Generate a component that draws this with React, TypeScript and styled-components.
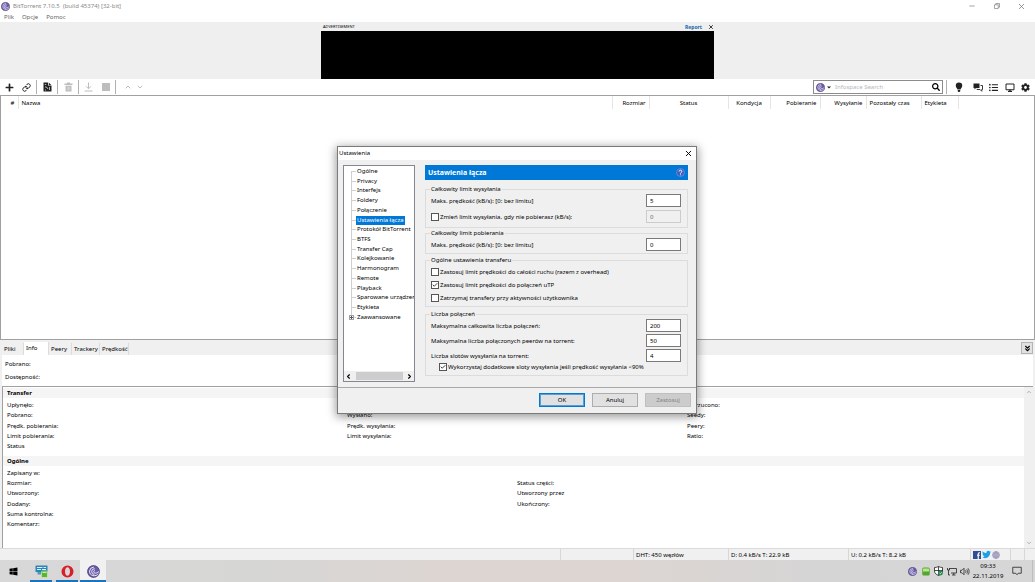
import React from 'react';
import styled, { createGlobalStyle, css } from 'styled-components';
import { FaPlus, FaSearch, FaListUl, FaCog, FaWindows, FaTwitter } from 'react-icons/fa';
import { Link as LinkIcon, X, Minus, ChevronUp, ChevronDown, ChevronLeft, ChevronRight, ChevronsDown, Check } from 'lucide-react';

const line = '#a0a0a0';
const face = '#f0f0f0';
const accent = '#0078d7';

const GlobalStyle = createGlobalStyle`
  *, *::before, *::after { box-sizing: border-box; }
  body { margin: 0; background: #fff; }
  body, button, input { font-family: "Noto Sans", "Open Sans", sans-serif; font-size: 6px; line-height: 10px; color: #000; }
  button { margin: 0; padding: 0; border: 0; background: none; display: inline-flex; align-items: center; justify-content: center; }
  svg { display: block; flex: none; }
  ul, dl, dd, dt { margin: 0; padding: 0; list-style: none; }
`;

/* ---------- window frame ---------- */

const Desktop = styled.div`
  position: relative;
  min-height: 100vh;
  display: flex;
  flex-direction: column;
`;

const TitleBar = styled.header`
  display: flex;
  align-items: center;
  height: 12px;
  padding: 0 8px 0 1px;
  gap: 3px;
  color: #8a8a8a;
`;

const TitleText = styled.span`
  flex: 1;
  white-space: pre;
`;

const WindowButtons = styled.div`
  display: flex;
  gap: 14px;
  button { width: 11px; height: 10px; color: #777; }
`;

const MenuBar = styled.nav`
  display: flex;
  height: 10px;
  padding-left: 4px;
  gap: 8px;
  button { color: #666; }
`;

const AdArea = styled.section`
  display: flex;
  justify-content: center;
  background: #efefef;
`;

const AdUnit = styled.div`
  width: 393px;
`;

const AdHeader = styled.div`
  display: flex;
  align-items: center;
  height: 9px;
  padding: 0 0 0 2px;
  font-size: 4px;
`;

const AdReport = styled.a`
  margin-left: auto;
  margin-right: 6px;
  font-size: 5px;
  font-weight: 700;
  color: #1565b0;
  text-decoration: none;
`;

const AdBanner = styled.div`
  height: 48px;
  background: #000;
`;

/* ---------- toolbar ---------- */

const Toolbar = styled.div`
  display: flex;
  align-items: center;
  height: 16px;
  padding: 0 2px;
`;

const ToolButton = styled.button<{ $w: number; $dim?: boolean }>`
  width: ${p => p.$w}px;
  height: 14px;
  color: ${p => (p.$dim ? '#bdbdbd' : '#222')};
`;

const MoveButtons = styled.div`
  display: flex;
  padding-left: 6px;
`;

const ToolDivider = styled.span`
  width: 1px;
  height: 14px;
  background: #b0b0b0;
`;

const SearchBox = styled.form`
  display: flex;
  align-items: center;
  width: 130px;
  height: 14px;
  margin-left: auto;
  margin-right: 3px;
  padding: 0 2px;
  border: 1px solid #8c8c8c;
  input {
    flex: 1;
    min-width: 0;
    margin-left: 4px;
    padding: 0;
    border: 0;
    outline: 0;
    background: none;
  }
  input::placeholder { color: #b4b8be; opacity: 1; }
  button { gap: 2px; }
`;

/* ---------- torrent list ---------- */

const TorrentPane = styled.main`
  flex: 1;
  min-height: 245px;
  border: 1px solid ${line};
`;

const TorrentTable = styled.table`
  width: 100%;
  table-layout: fixed;
  border-collapse: collapse;
`;

const HeadCell = styled.th<{ $w?: number; $align?: string }>`
  width: ${p => (p.$w ? p.$w + 'px' : 'auto')};
  height: 13px;
  padding: 0 3px;
  border-right: 1px solid #e5e5e5;
  font-weight: 400;
  text-align: ${p => p.$align ?? 'left'};
  white-space: nowrap;
  &:last-child { border-right: 0; }
`;

/* ---------- details pane ---------- */

const Details = styled.section`
  padding: 2px 2px 0;
  background: ${face};
`;

const TabStrip = styled.div`
  display: flex;
  height: 13px;
  align-items: flex-end;
`;

const Tab = styled.button<{ $w: number; $active?: boolean }>`
  width: ${p => p.$w}px;
  height: 12px;
  padding-left: 2px;
  justify-content: flex-start;
  border-right: 1px solid #dcdcdc;
  ${p => p.$active && css`
    height: 13px;
    padding-bottom: 2px;
    background: #fff;
  `}
`;

const CollapseButton = styled.button`
  align-self: flex-start;
  width: 12px;
  height: 12px;
  margin-left: auto;
  border: 1px solid #b4b4b4;
  background: #e1e1e1;
`;

const TabBody = styled.div`
  background: #fff;
`;

const Summary = styled.dl`
  display: flex;
  flex-direction: column;
  gap: 3px;
  height: 31px;
  padding: 4px 0 0 3px;
`;

const InfoBox = styled.div`
  display: flex;
  height: 162px;
  border-top: 1px solid ${line};
  border-left: 1px solid ${line};
`;

const InfoScroll = styled.div`
  flex: 1;
  padding-top: 1px;
`;

const InfoHeading = styled.h2`
  height: 10px;
  margin: 0;
  padding-left: 4px;
  font-size: 6px;
  line-height: 10px;
  background: #f5f5f5;
`;

const InfoGrid = styled.div<{ $cols: number; $rows: number }>`
  display: grid;
  grid-template-columns: repeat(${p => p.$cols}, 1fr);
  grid-template-rows: repeat(${p => p.$rows}, 10px);
  grid-auto-flow: column;
  column-gap: 3px;
  padding: 2px 0 5px 4px;
  align-content: space-between;
  height: ${p => (p.$rows === 5 ? 58 : 68)}px;
`;

const VScroll = styled.div`
  display: flex;
  flex-direction: column;
  justify-content: space-between;
  align-items: center;
  width: 9px;
  padding: 2px 0;
  background: ${face};
  color: #999;
`;

const StatusBar = styled.footer`
  display: flex;
  height: 12px;
  border-top: 1px solid #dadada;
  background: ${face};
`;

const StatusCell = styled.div<{ $w?: number }>`
  display: flex;
  align-items: center;
  gap: 1px;
  flex: ${p => (p.$w ? `0 0 ${p.$w}px` : '1')};
  padding-left: 2px;
  border-right: 1px solid #d7d7d7;
  white-space: nowrap;
  &:last-child { border-right: 0; }
`;

/* ---------- taskbar ---------- */

const TaskBar = styled.div`
  display: flex;
  align-items: center;
  height: 22px;
  background: linear-gradient(90deg, #d8d8d8 0%, #d6d6d5 25%, #dcd5d2 42%, #dcd5d2 60%, #d5d5d5 80%, #d6d6d6 100%);
`;

const TaskButton = styled.button<{ $w: number; $open?: boolean; $active?: boolean }>`
  width: ${p => p.$w}px;
  height: 22px;
  border-bottom: 2px solid ${p => (p.$open ? '#1a74bd' : 'transparent')};
  background: ${p => (p.$active ? '#f1f1f1' : 'none')};
  padding-top: 2px;
`;

const TaskGroup = styled.div`
  display: flex;
  gap: 4px;
  margin-left: 4px;
  & > :last-child { margin-left: -2px; }
`;

const Tray = styled.div`
  display: flex;
  align-items: center;
  margin-left: auto;
`;

const TrayButton = styled.button`
  width: 13px;
  height: 22px;
`;

const Clock = styled.time`
  width: 34px;
  text-align: center;
`;

const NotifyArea = styled.div`
  display: flex;
  align-items: center;
  justify-content: center;
  width: 28px;
  height: 22px;
  margin-right: 2px;
  padding-right: 3px;
  border-right: 1px solid #bdbdbd;
`;

/* ---------- settings dialog ---------- */

const DialogLayer = styled.div`
  position: absolute;
  inset: 0;
  display: flex;
  justify-content: center;
  align-items: flex-start;
  padding: 146px 1px 0 0;
`;

const Dialog = styled.section`
  width: 360px;
  border: 1px solid #7a7a7a;
  background: ${face};
  box-shadow: 0 2px 9px 1px rgba(0, 0, 0, 0.4);
`;

const DialogTitle = styled.header`
  display: flex;
  align-items: center;
  justify-content: space-between;
  height: 13px;
  padding: 0 3px 1px 1px;
  background: #fff;
`;

const DialogBody = styled.div`
  display: flex;
  gap: 10px;
  padding: 5px 8px 5px 5px;
`;

const TreePanel = styled.nav`
  display: flex;
  flex-direction: column;
  justify-content: space-between;
  width: 72px;
  height: 217px;
  padding-top: 1px;
  border: 1px solid #828790;
  background: #fff;
  overflow: hidden;
`;

const Tree = styled.ul`
  position: relative;
  display: flex;
  flex-direction: column;
  justify-content: space-between;
  height: 155px;
  padding-left: 7px;
  &::before {
    content: '';
    position: absolute;
    left: 7px;
    top: 5px;
    bottom: 5px;
    border-left: 1px solid #cfcfcf;
  }
`;

const TreeItem = styled.li`
  display: flex;
  align-items: center;
  height: 9px;
  white-space: nowrap;
  &::before {
    content: '';
    flex: none;
    width: 5px;
    border-top: 1px solid #cfcfcf;
  }
`;

const TreeLabel = styled.a<{ $selected?: boolean }>`
  padding: 0 1px;
  line-height: 9px;
  color: ${p => (p.$selected ? '#fff' : '#000')};
  background: ${p => (p.$selected ? accent : 'none')};
  text-decoration: none;
`;

const Expander = styled.span`
  position: absolute;
  left: 5px;
  bottom: 2px;
  width: 5px;
  height: 5px;
  border: 1px solid #a0a0a0;
  background: linear-gradient(#556, #556) center / 3px 1px no-repeat, linear-gradient(#556, #556) center / 1px 3px no-repeat, #fff;
`;

const HScroll = styled.div`
  display: flex;
  align-items: center;
  justify-content: space-between;
  height: 10px;
  padding: 0 1px;
  background: ${face};
`;

const HThumb = styled.span`
  width: 47px;
  height: 8px;
  background: #cdcdcd;
`;

const Page = styled.form`
  flex: 1;
`;

const PageHeading = styled.h1`
  display: flex;
  align-items: center;
  justify-content: space-between;
  height: 15px;
  margin: 0 0 4px;
  padding: 0 3px;
  font-size: 7px;
  color: #fff;
  background: ${accent};
`;

const Group = styled.fieldset<{ $pad?: string; $top?: number }>`
  min-width: 0;
  margin: ${p => p.$top ?? 0}px 0 0;
  padding: ${p => p.$pad ?? '0'};
  padding-left: 5px;
  padding-right: 6px;
  border: 1px solid #dcdcdc;
  legend { height: 10px; padding: 0 1px; margin-left: -1px; }
`;

const Fields = styled.div<{ $gap: number }>`
  display: flex;
  flex-direction: column;
  gap: ${p => p.$gap}px;
`;

const Field = styled.div`
  display: flex;
  align-items: center;
  justify-content: space-between;
  height: 13px;
`;

const NumberBox = styled.input`
  width: 35px;
  height: 13px;
  padding: 0 3px;
  border: 1px solid #7a7a7a;
  background: #fff;
  &:disabled { border-color: #ccc; background: ${face}; color: #6d6d6d; }
`;

const CheckLabel = styled.label<{ $indent?: boolean }>`
  display: flex;
  align-items: center;
  gap: 1px;
  height: ${p => (p.$indent ? 10 : 13)}px;
  padding-left: ${p => (p.$indent ? 8 : 0)}px;
  white-space: nowrap;
`;

const CheckMark = styled.span`
  display: grid;
  width: 8px;
  height: 8px;
  & > * { grid-area: 1 / 1; }
  input {
    appearance: none;
    width: 8px;
    height: 8px;
    margin: 0;
    border: 1px solid #555;
    background: #fff;
  }
  svg { visibility: hidden; place-self: center; z-index: 1; pointer-events: none; }
  input:checked + svg { visibility: visible; }
`;

const DialogActions = styled.footer`
  display: flex;
  justify-content: flex-end;
  gap: 7px;
  height: 26px;
  padding: 5px 5px 0 0;
  border-top: 1px solid #a8a8a8;
`;

const PushButton = styled.button<{ $primary?: boolean }>`
  width: 46px;
  height: 14px;
  border: 1px solid #adadad;
  background: #e1e1e1;
  ${p => p.$primary && css`border: 1px solid ${accent}; box-shadow: inset 0 0 0 1px #5a9fd0;`}
  &:disabled { border-color: #bfbfbf; background: #ccc; color: #838383; }
`;

/* ---------- drawings ---------- */

const Logo = ({ size }: { size: number }) => (
  <svg width={size} height={size} viewBox="0 0 20 20" aria-hidden="true">
    <circle cx="10" cy="10" r="9.6" fill="#6b5ca5" />
    <circle cx="10" cy="10" r="9" fill="none" stroke="#4d4180" strokeWidth="1" />
    <g fill="none" stroke="#eeeaf8" strokeWidth="1.5" strokeLinecap="round">
      <path d="M10 3.2a6.6 6.6 0 0 0-1 13" />
      <path d="M11 5.6a4.6 4.6 0 0 0-.3 9" />
      <path d="M11.6 8a2.4 2.4 0 0 0 .4 4.4c2 .4 4-.3 6-2" />
      <path d="M10 16.4c3 .4 5.6-.5 7-2.4" />
    </g>
  </svg>
);

const RestoreIcon = () => (
  <svg width="6" height="6" viewBox="0 0 12 12" fill="none" stroke="currentColor" strokeWidth="1.3">
    <path d="M1 3.5h7.500V11H1zM3.500 3.500V1H11v7.500H8.500" />
  </svg>
);

const NewTorrentIcon = () => (
  <svg width="9" height="10" viewBox="0 0 18 20">
    <path d="M1 1h9v6h7v12H1z" fill="#222" />
    <path d="M11.500 1l5 5h-5z" fill="#222" />
    <path d="M3.500 5h3M4 10h3l3 4M13 10v6M4 16h2" fill="none" stroke="#fff" strokeWidth="1.300" />
  </svg>
);

const TrashIcon = () => (
  <svg width="9" height="10" viewBox="0 0 18 20" fill="currentColor">
    <path d="M6 1h6v2h5v3H1V3h5zM3 7.500h12V19H3z" />
    <path d="M6.500 9.500v7M9 9.500v7M11.500 9.500v7" stroke="#e8e8e8" strokeWidth="1" />
  </svg>
);

const DownloadIcon = () => (
  <svg width="9" height="10" viewBox="0 0 18 20" fill="none" stroke="currentColor" strokeWidth="2">
    <path d="M9 1v12M4 8.500l5 5 5-5M1 18h16" />
  </svg>
);

const StopIcon = () => (
  <svg width="8" height="8" viewBox="0 0 8 8"><rect width="8" height="8" fill="currentColor" /></svg>
);

const CaretIcon = () => (
  <svg width="4" height="3" viewBox="0 0 4 3"><path d="M0 .5h4L2 2.500z" fill="#222" /></svg>
);

const BulbIcon = () => (
  <svg width="8" height="10" viewBox="0 0 16 20" fill="currentColor">
    <path d="M8 1a6.500 6.500 0 0 0-6.500 6.500c0 3 2.500 4.500 3.500 7.500h6c1-3 3.500-4.500 3.500-7.500A6.500 6.500 0 0 0 8 1zM5.500 16h5v2.500L9 20H7l-1.500-1.500z" />
  </svg>
);

const ChatIcon = () => (
  <svg width="10" height="9" viewBox="0 0 20 18">
    <path d="M1 1h12v9H6l-3 3v-3H1z" fill="#222" />
    <path d="M15 5h4v8h-1.500v3.500L14 13H8v-1.500" fill="none" stroke="#222" strokeWidth="1.800" />
  </svg>
);

const MonitorIcon = () => (
  <svg width="10" height="9" viewBox="0 0 20 18" fill="none" stroke="#222" strokeWidth="2">
    <path d="M2 2h16v11.500H2z" />
    <path d="M6 16.500h8M10 13v3" strokeWidth="2.500" />
  </svg>
);

const HelpIcon = () => (
  <svg width="9" height="9" viewBox="0 0 18 18">
    <circle cx="9" cy="9" r="8" fill="#3f62c4" stroke="#8fa6e0" strokeWidth="1" />
    <path d="M6.300 7a2.700 2.700 0 1 1 4 2.300c-1 .6-1.300 1-1.300 2M9 12.800v1.700" fill="none" stroke="#fff" strokeWidth="1.800" />
  </svg>
);

const FacebookIcon = () => (
  <svg width="8" height="8" viewBox="0 0 16 16">
    <rect width="16" height="16" fill="#2f4f92" />
    <path d="M14 3.500h-1.500c-1.500 0-2 .8-2 2V16M8 8.500h5.500" fill="none" stroke="#fff" strokeWidth="2.300" />
  </svg>
);

const GlobeIcon = () => (
  <svg width="8" height="8" viewBox="0 0 16 16" fill="#d2d0e2" stroke="#8683ab" strokeWidth="1.100">
    <circle cx="8" cy="8" r="7" />
    <path d="M1 8h14M8 1v14M2.500 4.500h11M2.500 11.500h11M8 1c-5 4-5 10 0 14M8 1c5 4 5 10 0 14" fill="none" />
  </svg>
);

const ServerAppIcon = () => (
  <svg width="13" height="13" viewBox="0 0 26 26">
    <rect x="1" y="1" width="24" height="13" rx="1" fill="#2a86b5" />
    <path d="M4 5h11M4 9h8M17 5h5M14 9h8" stroke="#d9eef8" strokeWidth="2" />
    <path d="M5 14h8v5H5z" fill="#4f9cc0" />
    <rect x="13" y="12" width="12" height="13" rx="2" fill="#5cb52f" stroke="#e9f7e0" strokeWidth="1" />
    <path d="M15 15h8" stroke="#c9efb2" strokeWidth="2" />
  </svg>
);

const OperaIcon = () => (
  <svg width="13" height="13" viewBox="0 0 26 26">
    <path fillRule="evenodd" fill="#d81f2a" d="M13 1a12 12 0 1 0 0 24a12 12 0 1 0 0-24zM13 4.500c3 0 5 3.800 5 8.500s-2 8.500-5 8.500-5-3.800-5-8.500 2-8.500 5-8.500z" />
  </svg>
);

const GreenDriveIcon = () => (
  <svg width="8" height="9" viewBox="0 0 16 18">
    <rect x=".5" y="1" width="15" height="16" rx="3" fill="#55a630" />
    <rect x="2" y="3" width="12" height="6" rx="1" fill="#b9e58f" />
  </svg>
);

const ShieldIcon = () => (
  <svg width="9" height="10" viewBox="0 0 18 20">
    <path d="M9 1c2.500 1.500 5 2 8 2v7c0 4.500-4 7.500-8 9-4-1.500-8-4.500-8-9V3c3 0 5.500-.5 8-2zM9 1v18M1 9h16" fill="#fff" stroke="#222" strokeWidth="1.600" />
    <circle cx="13" cy="14" r="4.800" fill="#1f8a4c" />
    <path d="M10.800 14l1.700 1.700 3-3.400" fill="none" stroke="#fff" strokeWidth="1.400" />
  </svg>
);

const NetworkIcon = () => (
  <svg width="10" height="9" viewBox="0 0 20 18" fill="none" stroke="#222" strokeWidth="1.600">
    <path d="M5 3h14v9H8M10 16h7M13.500 12v4M1 2v4h4V2M3 6v10h3" />
  </svg>
);

const VolumeIcon = () => (
  <svg width="10" height="9" viewBox="0 0 20 18" fill="none" stroke="#222" strokeWidth="1.500">
    <path d="M1 6.500h3l4-4v13l-4-4H1zM11 6.500c1 1.500 1 3.500 0 5M13.500 4.500c2 3 2 6 0 9M16 2.500c3 4 3 9 0 13" />
  </svg>
);

const NoteIcon = () => (
  <svg width="10" height="10" viewBox="0 0 20 20" fill="none" stroke="#222" strokeWidth="1.600">
    <path d="M1.500 2.500h17v12h-6L10 17.500l-2.500-3h-6z" />
  </svg>
);

/* ---------- content ---------- */

const columns: { label: string; w?: number; align?: string }[] = [
  { label: '#', w: 17, align: 'right' },
  { label: 'Nazwa' },
  { label: 'Rozmiar', w: 37, align: 'right' },
  { label: 'Status', w: 79, align: 'center' },
  { label: 'Kondycja', w: 42, align: 'center' },
  { label: 'Pobieranie', w: 50, align: 'right' },
  { label: 'Wysyłanie', w: 46, align: 'right' },
  { label: 'Pozostały czas', w: 55 },
  { label: 'Etykieta', w: 37 },
  { label: '', w: 76 },
];

const tabs = [
  { label: 'Pliki', w: 22 },
  { label: 'Info', w: 25, active: true },
  { label: 'Peery', w: 23 },
  { label: 'Trackery', w: 28 },
  { label: 'Prędkość', w: 29 },
];

const transferInfo = [
  ['Upłynęło:', 'Pobrano:', 'Prędk. pobierania:', 'Limit pobierania:', 'Status'],
  ['Pozostało:', 'Wysłano:', 'Prędk. wysyłania:', 'Limit wysyłania:', ''],
  ['Odrzucono:', 'Seedy:', 'Peery:', 'Ratio:', ''],
];

const generalInfo = [
  ['Zapisany w:', 'Rozmiar:', 'Utworzony:', 'Dodany:', 'Suma kontrolna:', 'Komentarz:'],
  ['', 'Status części:', 'Utworzony przez', 'Ukończony:', '', ''],
];

const treeItems = [
  'Ogólne', 'Privacy', 'Interfejs', 'Foldery', 'Połączenie', 'Ustawienia łącza', 'Protokół BitTorrent', 'BTFS',
  'Transfer Cap', 'Kolejkowanie', 'Harmonogram', 'Remote', 'Playback', 'Sparowane urządzenia', 'Etykieta', 'Zaawansowane',
];

const CheckOption = ({ label, checked, indent }: { label: string; checked?: boolean; indent?: boolean }) => (
  <CheckLabel $indent={indent}>
    <CheckMark>
      <input type="checkbox" defaultChecked={checked} />
      <Check size={6} strokeWidth={3} />
    </CheckMark>
    {label}
  </CheckLabel>
);

const NumberField = ({ id, label, value }: { id: string; label: string; value: string }) => (
  <Field>
    <label htmlFor={id}>{label}</label>
    <NumberBox id={id} defaultValue={value} />
  </Field>
);

const InfoColumns = ({ data }: { data: string[][] }) => (
  <InfoGrid $cols={data.length} $rows={data[0].length}>
    {data.flatMap((col, c) => col.map((text, r) => <span key={c + '-' + r}>{text}</span>))}
  </InfoGrid>
);

const SettingsDialog = () => (
  <DialogLayer>
    <Dialog role="dialog" aria-label="Ustawienia">
      <DialogTitle>
        Ustawienia
        <button type="button" aria-label="Zamknij"><X size={9} strokeWidth={2.5} /></button>
      </DialogTitle>
      <DialogBody>
        <TreePanel>
          <Tree>
            {treeItems.map(t => (
              <TreeItem key={t}>
                <TreeLabel href="#" $selected={t === 'Ustawienia łącza'}>{t}</TreeLabel>
              </TreeItem>
            ))}
            <Expander />
          </Tree>
          <HScroll>
            <ChevronLeft size={7} strokeWidth={4} />
            <HThumb />
            <ChevronRight size={7} strokeWidth={4} />
          </HScroll>
        </TreePanel>
        <Page>
          <PageHeading>Ustawienia łącza<HelpIcon /></PageHeading>
          <Group $pad="0 0 4px">
            <legend>Całkowity limit wysyłania</legend>
            <Fields $gap={3}>
              <NumberField id="up" label="Maks. prędkość (kB/s): [0: bez limitu]" value="5" />
              <Field>
                <CheckOption label="Zmień limit wysyłania, gdy nie pobierasz (kB/s):" />
                <NumberBox aria-label="Limit wysyłania" defaultValue="0" disabled />
              </Field>
            </Fields>
          </Group>
          <Group $pad="0 0 2px">
            <legend>Całkowity limit pobierania</legend>
            <NumberField id="down" label="Maks. prędkość (kB/s): [0: bez limitu]" value="0" />
          </Group>
          <Group $top={1} $pad="0 0 2px">
            <legend>Ogólne ustawienia transferu</legend>
            <CheckOption label="Zastosuj limit prędkości do całości ruchu (razem z overhead)" />
            <CheckOption label="Zastosuj limit prędkości do połączeń uTP" checked />
            <CheckOption label="Zatrzymaj transfery przy aktywności użytkownika" />
          </Group>
          <Group $top={2} $pad="0 0 3px">
            <legend>Liczba połączeń</legend>
            <Fields $gap={2}>
              <NumberField id="total" label="Maksymalna całkowita liczba połączeń:" value="200" />
              <NumberField id="peers" label="Maksymalna liczba połączonych peerów na torrent:" value="50" />
              <NumberField id="slots" label="Liczba slotów wysyłania na torrent:" value="4" />
            </Fields>
            <CheckOption label="Wykorzystaj dodatkowe sloty wysyłania jeśli prędkość wysyłania <90%" checked indent />
          </Group>
        </Page>
      </DialogBody>
      <DialogActions>
        <PushButton type="button" $primary>OK</PushButton>
        <PushButton type="button">Anuluj</PushButton>
        <PushButton type="button" disabled>Zastosuj</PushButton>
      </DialogActions>
    </Dialog>
  </DialogLayer>
);

export default function App() {
  return (
    <Desktop>
      <GlobalStyle />
      <TitleBar>
        <Logo size={9} />
        <TitleText>{'BitTorrent 7.10.5  (build 45374) [32-bit]'}</TitleText>
        <WindowButtons>
          <button aria-label="Minimalizuj"><Minus size={8} /></button>
          <button aria-label="Przywróć"><RestoreIcon /></button>
          <button aria-label="Zamknij okno"><X size={9} strokeWidth={2} /></button>
        </WindowButtons>
      </TitleBar>
      <MenuBar>
        <button>Plik</button>
        <button>Opcje</button>
        <button>Pomoc</button>
      </MenuBar>
      <AdArea>
        <AdUnit>
          <AdHeader>
            ADVERTISEMENT
            <AdReport href="#">Report</AdReport>
            <button aria-label="Ukryj"><X size={6} strokeWidth={3} /></button>
          </AdHeader>
          <AdBanner />
        </AdUnit>
      </AdArea>
      <Toolbar>
        <ToolButton $w={14} aria-label="Dodaj"><FaPlus size={9} /></ToolButton>
        <ToolButton $w={20} aria-label="Dodaj z adresu"><LinkIcon size={9} strokeWidth={2.6} /></ToolButton>
        <ToolDivider />
        <ToolButton $w={20} aria-label="Utwórz torrent"><NewTorrentIcon /></ToolButton>
        <ToolDivider />
        <ToolButton $w={20} $dim aria-label="Usuń"><TrashIcon /></ToolButton>
        <ToolDivider />
        <ToolButton $w={19} $dim aria-label="Start"><DownloadIcon /></ToolButton>
        <ToolButton $w={15} $dim aria-label="Zatrzymaj"><StopIcon /></ToolButton>
        <ToolButton $w={2} as="span" />
        <ToolDivider />
        <MoveButtons>
          <ToolButton $w={12} $dim aria-label="W górę"><ChevronUp size={8} strokeWidth={3} /></ToolButton>
          <ToolButton $w={12} $dim aria-label="W dół"><ChevronDown size={8} strokeWidth={3} /></ToolButton>
        </MoveButtons>
        <SearchBox>
          <button type="button" aria-label="Wyszukiwarka"><Logo size={9} /><CaretIcon /></button>
          <input type="search" aria-label="Szukaj" placeholder="Infospace Search" />
          <button type="submit" aria-label="Szukaj teraz"><FaSearch size={8} /></button>
        </SearchBox>
        <ToolDivider />
        <ToolButton $w={23} aria-label="Porady"><BulbIcon /></ToolButton>
        <ToolButton $w={15} aria-label="Czat"><ChatIcon /></ToolButton>
        <ToolButton $w={16} aria-label="Lista"><FaListUl size={9} /></ToolButton>
        <ToolButton $w={17} aria-label="Urządzenia"><MonitorIcon /></ToolButton>
        <ToolButton $w={15} aria-label="Ustawienia"><FaCog size={9} /></ToolButton>
      </Toolbar>
      <TorrentPane>
        <TorrentTable>
          <thead>
            <tr>
              {columns.map(c => (
                <HeadCell key={c.label} $w={c.w} $align={c.align}>{c.label}</HeadCell>
              ))}
            </tr>
          </thead>
        </TorrentTable>
      </TorrentPane>
      <Details>
        <TabStrip role="tablist">
          {tabs.map(t => (
            <Tab key={t.label} role="tab" $w={t.w} $active={t.active}>{t.label}</Tab>
          ))}
          <CollapseButton aria-label="Zwiń"><ChevronsDown size={9} strokeWidth={3} /></CollapseButton>
        </TabStrip>
        <TabBody>
          <Summary>
            <dt>Pobrano:</dt>
            <dt>Dostępność:</dt>
          </Summary>
          <InfoBox>
            <InfoScroll>
              <InfoHeading>Transfer</InfoHeading>
              <InfoColumns data={transferInfo} />
              <InfoHeading>Ogólne</InfoHeading>
              <InfoColumns data={generalInfo} />
            </InfoScroll>
            <VScroll>
              <ChevronUp size={6} strokeWidth={3} />
              <ChevronDown size={6} strokeWidth={3} />
            </VScroll>
          </InfoBox>
        </TabBody>
      </Details>
      <StatusBar>
        <StatusCell />
        <StatusCell $w={73} />
        <StatusCell $w={95}>DHT: 450 węzłów</StatusCell>
        <StatusCell $w={120}>D: 0.4 kB/s T: 22.9 kB</StatusCell>
        <StatusCell $w={122}>U: 0.2 kB/s T: 8.2 kB</StatusCell>
        <StatusCell $w={40}><FacebookIcon /><FaTwitter size={9} color="#1da1e6" /><GlobeIcon /></StatusCell>
        <StatusCell $w={14} />
        <StatusCell $w={10} />
      </StatusBar>
      <TaskBar>
        <TaskButton $w={26} aria-label="Start"><FaWindows size={9} /></TaskButton>
        <TaskGroup>
          <TaskButton $w={22} $open aria-label="Serwer"><ServerAppIcon /></TaskButton>
          <TaskButton $w={22} $open aria-label="Opera"><OperaIcon /></TaskButton>
          <TaskButton $w={26} $open $active aria-label="BitTorrent"><Logo size={13} /></TaskButton>
        </TaskGroup>
        <Tray>
          <TrayButton aria-label="BitTorrent"><Logo size={9} /></TrayButton>
          <TrayButton aria-label="Dysk"><GreenDriveIcon /></TrayButton>
          <TrayButton aria-label="Zabezpieczenia"><ShieldIcon /></TrayButton>
          <TrayButton aria-label="Sieć"><NetworkIcon /></TrayButton>
          <TrayButton aria-label="Głośność"><VolumeIcon /></TrayButton>
          <Clock>09:33<br />22.11.2019</Clock>
          <NotifyArea><NoteIcon /></NotifyArea>
        </Tray>
      </TaskBar>
      <SettingsDialog />
    </Desktop>
  );
}
